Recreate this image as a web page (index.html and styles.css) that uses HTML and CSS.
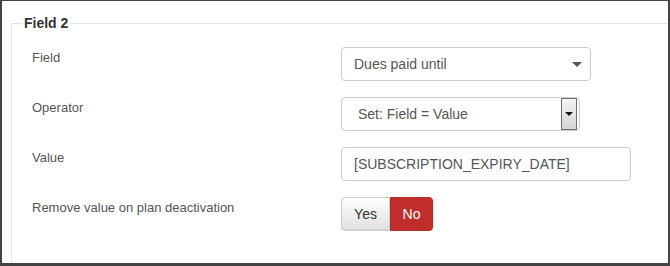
FILE: index.html
```html
<!DOCTYPE html>
<html lang="en">
<head>
    <meta charset="UTF-8" />
    <title>Field mapping</title>
    <link rel="stylesheet" href="styles.css">
</head>
<body>
    <div class="frame">
        <fieldset class="field-set">
            <legend>Field 2</legend>

            <div class="form-row">
                <label class="row-label">Field</label>
                <div class="fake-select select-wide">
                    <span class="select-text">Dues paid until</span>
                    <span class="caret"></span>
                </div>
            </div>

            <div class="form-row">
                <label class="row-label">Operator</label>
                <div class="fake-select select-native">
                    <span class="select-text">Set: Field = Value</span>
                    <span class="native-button"><span class="native-arrow"></span></span>
                </div>
            </div>

            <div class="form-row">
                <label class="row-label">Value</label>
                <div class="text-input">[SUBSCRIPTION_EXPIRY_DATE]</div>
            </div>

            <div class="form-row">
                <label class="row-label">Remove value on plan deactivation</label>
                <div class="btn-group">
                    <span class="btn btn-yes">Yes</span>
                    <span class="btn btn-no">No</span>
                </div>
            </div>
        </fieldset>
    </div>
</body>
</html>
```

FILE: styles.css
```css
* {
    box-sizing: border-box;
}

body {
    margin: 0;
    font-family: "Liberation Sans", Arial, sans-serif;
    background: #fff;
}

.frame {
    width: 670px;
    height: 266px;
    border: 2px solid #444;
    border-top-width: 1px;
    border-bottom-width: 3px;
    overflow: hidden;
    padding: 12px 0 0 9px;
}

.field-set {
    margin: 0;
    width: 700px;
    height: 300px;
    border: 1px solid #e5e5e5;
    padding: 14px 0 0 20px;
}

.field-set legend {
    font-size: 14px;
    font-weight: bold;
    color: #333;
    line-height: 20px;
    padding: 0 2px;
    margin-left: -10px;
}

.form-row {
    display: flex;
    align-items: flex-start;
    height: 50px;
}

.row-label {
    width: 309px;
    flex-shrink: 0;
    font-size: 13px;
    line-height: 18px;
    color: #555;
    padding-top: 2px;
}

.fake-select,
.text-input {
    height: 34px;
    border: 1px solid #ccc;
    border-radius: 4px;
    font-size: 14px;
    color: #555;
    display: flex;
    align-items: center;
    background: #fff;
}

.select-wide {
    width: 250px;
    padding: 0 8px 0 12px;
    justify-content: space-between;
}

.caret {
    width: 0;
    height: 0;
    border-left: 5px solid transparent;
    border-right: 5px solid transparent;
    border-top: 5px solid #555;
}

.select-native {
    width: 239px;
    padding: 0 1px 0 16px;
    justify-content: space-between;
}

.native-button {
    width: 16px;
    height: 32px;
    border: 1px solid #6f6f6f;
    background: linear-gradient(#f4f4f4, #d6d6d6);
    display: flex;
    align-items: center;
    justify-content: center;
    margin-right: 1px;
}

.native-arrow {
    width: 0;
    height: 0;
    border-left: 4px solid transparent;
    border-right: 4px solid transparent;
    border-top: 4px solid #111;
}

.text-input {
    width: 290px;
    padding: 0 12px;
}

.btn-group {
    display: flex;
}

.btn {
    height: 34px;
    font-size: 14px;
    display: flex;
    align-items: center;
    justify-content: center;
    border: 1px solid #ccc;
}

.btn-yes {
    width: 49px;
    color: #333;
    background: linear-gradient(#fff, #e0e0e0);
    border-radius: 4px 0 0 4px;
    box-shadow: inset 0 -1px 0 rgba(0, 0, 0, 0.05);
}

.btn-no {
    width: 43px;
    color: #fff;
    background: #c12e2a;
    border-color: #b52b27;
    border-radius: 0 4px 4px 0;
}
```
